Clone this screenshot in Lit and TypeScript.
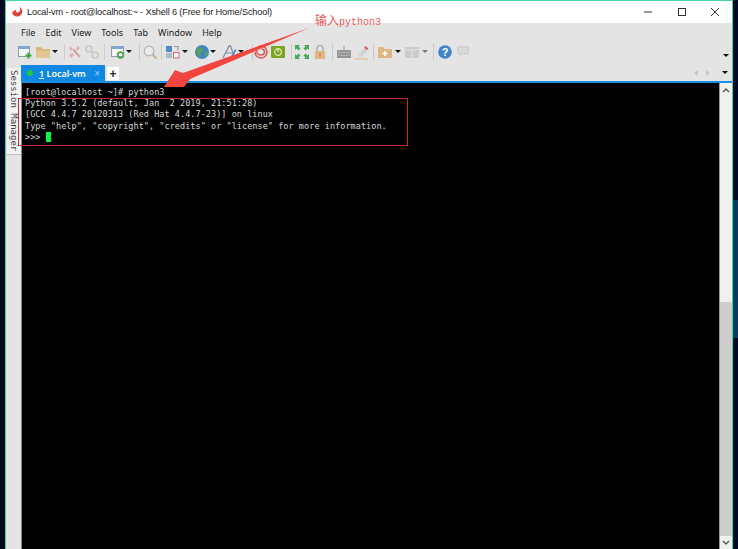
import { LitElement, html, css, svg } from "lit";
import { customElement } from "lit/decorators.js";

const icons: Record<string, unknown> = {
  new: svg`<rect x="1.5" y="2.5" width="11" height="10" fill="#f6f6f6" stroke="#8c9bae"/><rect x="1.5" y="2.5" width="11" height="2.5" fill="#7ba9d3"/><path d="M11.5 8.500v6M8.500 11.500h6" stroke="#3aa83a" stroke-width="2"/>`,
  folder: svg`<path d="M1 3h5l1.500 2H15v9H1z" fill="#d9b57f"/><path d="M1 6.500h14V14H1z" fill="#e3c596"/>`,
  tools: svg`<path d="M3 2l3 3-2 2-2-3zM11 2l2 2-3 3-1-2zM2 11l3-2 2 2-3 3zM10 9l4 3-2 2-3-4z" fill="#e0aeb0"/><circle cx="8" cy="8" r="2" fill="#d0d0d0"/><path d="M6 5l5 6" stroke="#d98a8d" stroke-width="1.200"/>`,
  link: svg`<circle cx="5" cy="5" r="3" fill="none" stroke="#c8c8c8" stroke-width="1.600"/><circle cx="11" cy="11" r="3" fill="none" stroke="#c8c8c8" stroke-width="1.600"/><path d="M7 7l2 2" stroke="#c8c8c8" stroke-width="1.600"/>`,
  settings: svg`<rect x="1.5" y="2.5" width="12" height="10" fill="#f6f6f6" stroke="#8c9bae"/><rect x="1.5" y="2.5" width="12" height="2.5" fill="#7ba9d3"/><circle cx="10.500" cy="11" r="2.800" fill="none" stroke="#4aa84a" stroke-width="1.800"/>`,
  search: svg`<circle cx="7" cy="7" r="4.800" fill="#ececec" stroke="#b4b4b4" stroke-width="1.300"/><path d="M10.500 10.500l4 4" stroke="#cdb08c" stroke-width="2"/>`,
  swap: svg`<rect x="1" y="2" width="6" height="6" fill="#4f8ac8"/><rect x="8.500" y="8.500" width="5.500" height="5.500" fill="#f6f6f6" stroke="#d9686e"/><rect x="1" y="9" width="6" height="5" fill="#a9bccf"/><path d="M9 2.500h4v4" fill="none" stroke="#999" stroke-width="1.200"/>`,
  globe: svg`<circle cx="8" cy="8" r="7" fill="#4285c6"/><path d="M4 3l4 1 1 3-3 1 1 4-2 1-3-5zM11 7l3 1-1 4-2 1z" fill="#5aa356"/>`,
  font: svg`<path d="M2 14L8 2h1.500L13 12" fill="none" stroke="#7f8ea6" stroke-width="1.300"/><path d="M5 9h6" stroke="#7f8ea6" stroke-width="1"/><path d="M9 14l5-9 1.500 1-5 9z" fill="#4f8ccb"/>`,
  spiral: svg`<path d="M2 8a6 6 0 1 0 6-6c-3 0-4.500 2-4.500 4.500S5.500 11 8 11s3.500-2 3.500-3.500S10 5 8.500 5.500" fill="none" stroke="#dc5a56" stroke-width="1.600"/>`,
  green: svg`<rect x="1" y="2" width="14" height="12" rx="1" fill="#7ca51f"/><circle cx="8" cy="8" r="3.300" fill="none" stroke="#dfeac0" stroke-width="1.200"/><path d="M8 4.500v3.500" stroke="#dfeac0" stroke-width="1.300"/>`,
  expand: svg`<path d="M1 1h5L4.500 2.500l2 2-2 2-2-2L1 6zM15 1v5l-1.500-1.500-2 2-2-2 2-2L10 1zM1 15v-5l1.500 1.500 2-2 2 2-2 2L6 15zM15 15h-5l1.500-1.500-2-2 2-2 2 2L15 10z" fill="#44ad53"/>`,
  lock: svg`<path d="M5 7V4.500a3 3 0 0 1 6 0V7" fill="none" stroke="#b0b0b0" stroke-width="1.600"/><rect x="3" y="7" width="10" height="8" rx="1" fill="#dfb682"/><rect x="7.300" y="9.500" width="1.400" height="3" fill="#b08c5a"/>`,
  keyboard: svg`<path d="M8 2v4" stroke="#a4a4a4" stroke-width="1.200"/><rect x="1" y="6" width="14" height="8" fill="#969696"/><path d="M2.500 8.500h11M2.500 11.500h11" stroke="#c0c0c0" stroke-dasharray="1.500 1"/>`,
  pen: svg`<path d="M5 10l6-7 3 2.500-6 7-3.500 1z" fill="#d2d2d2"/><path d="M10 3.500l1.500-1.500 3 2.500-1.500 1.800z" fill="#dd6460"/><path d="M1 15h13" stroke="#e3c08c" stroke-width="1.300"/>`,
  addfolder: svg`<path d="M1 3h5l1.500 2H15v9H1z" fill="#dfb682"/><path d="M8 7v5M5.500 9.500h5" stroke="#fff" stroke-width="1.700"/>`,
  layout: svg`<rect x="1" y="3" width="14" height="11" fill="#cbcbcb"/><path d="M1.500 6h13M8 6v8" stroke="#e4e4e4"/>`,
  help: svg`<circle cx="8" cy="8" r="6.800" fill="#4284c8"/><text x="8" y="11.800" text-anchor="middle" class="q">?</text>`,
  chat: svg`<path d="M2 2h12v8.500H7L4.500 13v-2.500H2z" fill="#d2d2d2"/><path d="M4 5h8M4 7.500h8" stroke="#e4e4e4"/>`,
};

type Item = [string, number];
const items: Item[] = [
  ["new", 0], ["folder", 2], ["caret", 1], ["sep", 6], ["tools", 2], ["link", 1], ["sep", 4],
  ["settings", 5], ["caret", 0], ["sep", 7], ["search", 2], ["sep", 3], ["swap", 3], ["caret", 1],
  ["globe", 6], ["caret", 0], ["font", 5], ["caret", 1], ["sep", 8], ["spiral", 0], ["green", 1],
  ["sep", 5], ["expand", 2], ["lock", 2], ["sep", 4], ["keyboard", 3], ["pen", 2], ["sep", 3],
  ["addfolder", 3], ["caret", 2], ["layout", 3], ["caretgray", 2], ["sep", 5], ["help", 3], ["chat", 2],
];

const menus = ["File", "Edit", "View", "Tools", "Tab", "Window", "Help"];

@customElement("app-root")
export class AppRoot extends LitElement {
  static styles = css`
    :host { display: block; width: 738px; height: 549px; position: relative; overflow: hidden; background: #020824; }
    .desk { display: flex; height: 549px; padding-left: 5px; box-sizing: border-box; }
    .edge { width: 5px; display: flex; flex-direction: column; }
    .edge-top { height: 200px; }
    .edge-blue { height: 138px; background: #0b3a5e; }
    .win { width: 728px; height: 549px; box-sizing: border-box; border: 1px solid #3fd69b; border-bottom: 0; display: flex; flex-direction: column; background: #e4e4e4; }
    .title { height: 22px; background: #fff; display: flex; align-items: center; flex: none; }
    .logo { margin: 0 4px 0 5px; flex: none; }
    .title-text { font: 9.200px "Liberation Sans", sans-serif; letter-spacing: -0.15px; color: #222; }
    .controls { margin-left: auto; display: flex; }
    .ctl { width: 33.5px; height: 22px; display: flex; align-items: center; justify-content: center; }
    .menu { height: 20px; display: flex; align-items: center; gap: 10px; padding-left: 15px; padding-bottom: 2px; box-sizing: border-box; flex: none; font: 9px "Noto Sans", sans-serif; color: #1c1c1c; }
    .toolbar { height: 22px; display: flex; align-items: center; padding: 0 3px 4px 11px; box-sizing: border-box; flex: none; }
    .ico { width: 16px; height: 16px; flex: none; display: block; }
    .q { font: bold 11px "Liberation Sans", sans-serif; fill: #fff; }
    .sep { width: 1px; height: 16px; background: #cbcbcb; flex: none; }
    .caret { width: 6px; height: 4px; flex: none; display: flex; justify-content: center; }
    .tri { width: 0; height: 0; border-left: 3px solid transparent; border-right: 3px solid transparent; border-top: 3px solid #111; }
    .gray .tri { border-top-color: #777; }
    .end-caret { margin-left: auto; margin-top: 8px; }
    .body { flex: 1; display: flex; min-height: 0; }
    .side { width: 15px; flex: none; padding-top: 3px; border-right: 1px solid #8a8a8a; box-sizing: content-box; }
    .session { width: 14px; height: 87px; margin-left: 1px; background: #f3f3f3; border-bottom: 1px solid #bdbdbd; writing-mode: vertical-rl; font: 9px "DejaVu Sans Mono", monospace; color: #444; line-height: 14px; padding-top: 2px; box-sizing: border-box; }
    .main { flex: 1; display: flex; flex-direction: column; min-width: 0; }
    .tabs { height: 16px; display: flex; flex: none; align-items: flex-end; }
    .tab { width: 84px; height: 16px; margin-left: -1px; background: #0f88e4; color: #fff; display: flex; align-items: center; font: 600 9px "Noto Sans", sans-serif; box-sizing: border-box; padding-left: 6px; }
    .dot { width: 6px; height: 6px; border-radius: 50%; background: #1fc83c; margin-right: 6px; flex: none; }
    .one { text-decoration: underline; }
    .x { margin-left: auto; margin-right: 5px; color: #9dcdf2; font: 10px "Liberation Sans", sans-serif; }
    .plus { width: 12px; height: 13px; margin-left: 2px; margin-bottom: 1px; background: #fff; color: #222; display: flex; align-items: center; justify-content: center; font: bold 12px "Liberation Sans", sans-serif; }
    .nav { margin-left: auto; display: flex; align-items: center; height: 16px; padding-right: 4px; }
    .la, .ra { width: 0; height: 0; border-top: 3.500px solid transparent; border-bottom: 3.500px solid transparent; }
    .la { border-right: 4px solid #c8c8c8; }
    .ra { border-left: 4px solid #c8c8c8; margin-left: 8px; margin-right: 12px; }
    .rule { height: 2px; background: #1a8fe8; flex: none; }
    .content { flex: 1; display: flex; min-height: 0; }
    .term { flex: 1; background: #000; color: #d9d9d9; font: 8.500px/11.200px "DejaVu Sans Mono", monospace; letter-spacing: 0.05px; padding: 4px 0 0 3px; min-width: 0; }
    .line { height: 11.200px; white-space: pre; }
    .cursor { display: inline-block; width: 5px; height: 10px; background: #0cf53d; vertical-align: -2px; }
    .scroll { width: 12px; flex: none; display: flex; flex-direction: column; background: #f0f0f0; border-left: 1px solid #9a9a9a; box-sizing: content-box; }
    .btn { height: 13px; display: flex; align-items: center; justify-content: center; flex: none; }
    .gap { height: 206px; flex: none; }
    .thumb { flex: 1; background: #cdcdcd; }
    .note { position: absolute; left: 315px; top: 12px; color: #ef5a55; font: 12px "Noto Sans CJK SC", sans-serif; white-space: nowrap; line-height: 15px; }
    .note span { font: 10px "Liberation Mono", monospace; }
    .box { position: absolute; left: 18px; top: 98px; width: 390px; height: 48px; box-sizing: border-box; border: 1px solid #c8272d; }
    .arrow { position: absolute; left: 0; top: 0; pointer-events: none; }
  `;

  private tool(name: string, ml: number) {
    const style = `margin-left:${ml}px`;
    if (name === "sep") return html`<div class="sep" style=${style}></div>`;
    if (name === "caret") return html`<div class="caret" style=${style}><div class="tri"></div></div>`;
    if (name === "caretgray") return html`<div class="caret gray" style=${style}><div class="tri"></div></div>`;
    return html`<svg class="ico" style=${style} viewBox="0 0 16 16">${icons[name]}</svg>`;
  }

  render() {
    return html`
      <div class="desk">
        <div class="win">
          <div class="title">
            <svg class="logo" width="12" height="12" viewBox="0 0 16 16"><path d="M1 7a7 7 0 1 0 14 0c0-3-2-5-4.500-6 1.500 1.500 2 3 1.500 5-.5 2-2.500 3-4 2.500S5.500 6 7 5.500c-2.500-.5-4 1-4 3C2 8 1.500 7.500 1 7z" fill="#e0413a"/></svg>
            <span class="title-text">Local-vm - root@localhost:~ - Xshell 6 (Free for Home/School)</span>
            <div class="controls">
              <div class="ctl"><svg width="10" height="10" viewBox="0 0 10 10"><path d="M1 5h8" stroke="#333" stroke-width="1"/></svg></div>
              <div class="ctl"><svg width="10" height="10" viewBox="0 0 10 10"><rect x="1.500" y="1.500" width="7" height="7" fill="none" stroke="#333"/></svg></div>
              <div class="ctl"><svg width="10" height="10" viewBox="0 0 10 10"><path d="M1 1l8 8M9 1l-8 8" stroke="#333" stroke-width="1"/></svg></div>
            </div>
          </div>
          <div class="menu">${menus.map((m) => html`<span>${m}</span>`)}</div>
          <div class="toolbar">
            ${items.map(([n, ml]) => this.tool(n, ml))}
            <div class="caret end-caret"><div class="tri"></div></div>
          </div>
          <div class="body">
            <div class="side"><div class="session">Session Manager</div></div>
            <div class="main">
              <div class="tabs">
                <div class="tab"><span class="dot"></span><span class="one">1</span>&nbsp;Local-vm<span class="x">×</span></div>
                <div class="plus">+</div>
                <div class="nav"><div class="la"></div><div class="ra"></div><div class="caret"><div class="tri"></div></div></div>
              </div>
              <div class="rule"></div>
              <div class="content">
                <div class="term">
                  <div class="line">[root@localhost ~]# python3</div>
                  <div class="line">Python 3.5.2 (default, Jan  2 2019, 21:51:28)</div>
                  <div class="line">[GCC 4.4.7 20120313 (Red Hat 4.4.7-23)] on linux</div>
                  <div class="line">Type "help", "copyright", "credits" or "license" for more information.</div>
                  <div class="line">&gt;&gt;&gt; <span class="cursor"></span></div>
                </div>
                <div class="scroll">
                  <div class="btn"><svg width="8" height="6" viewBox="0 0 8 6"><path d="M1 5l3-3 3 3" fill="none" stroke="#555" stroke-width="1.400"/></svg></div>
                  <div class="gap"></div>
                  <div class="thumb"></div>
                  <div class="btn"><svg width="8" height="6" viewBox="0 0 8 6"><path d="M1 1l3 3 3-3" fill="none" stroke="#555" stroke-width="1.400"/></svg></div>
                </div>
              </div>
            </div>
          </div>
        </div>
        <div class="edge"><div class="edge-top"></div><div class="edge-blue"></div></div>
      </div>
      <div class="note">输入<span>python3</span></div>
      <div class="box"></div>
      <svg class="arrow" width="738" height="549" viewBox="0 0 738 549"><path d="M164 87L175 70L183 73L309 28L190 79L184 87z" fill="#f2453f"/></svg>
    `;
  }
}
